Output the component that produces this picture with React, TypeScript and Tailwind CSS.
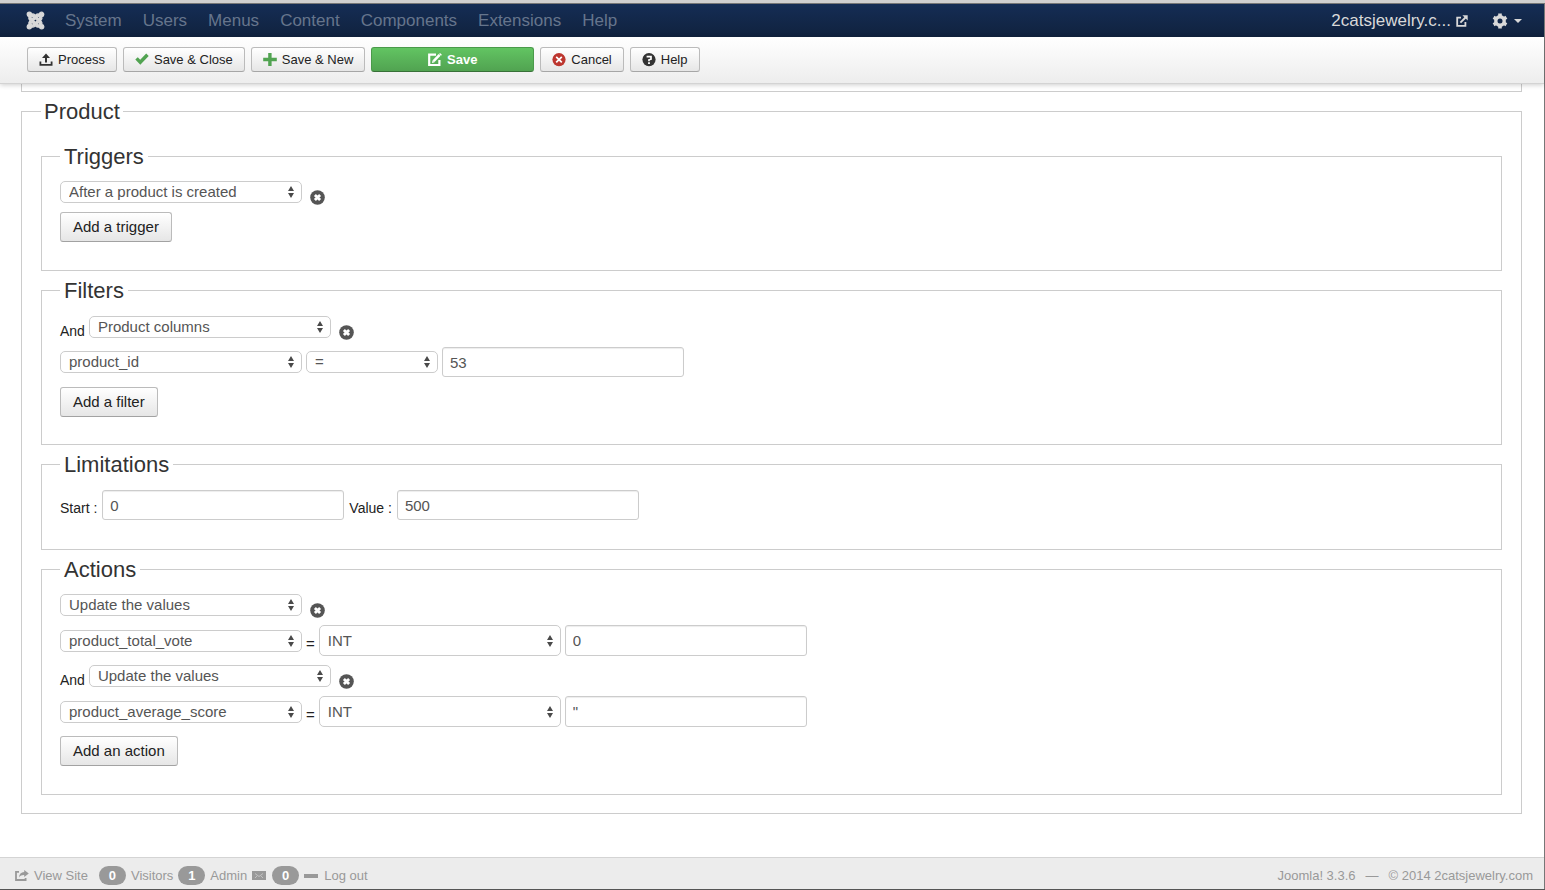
import { useState } from 'react'
import type { ReactNode } from 'react'
import { FaJoomla } from 'react-icons/fa'

const menuItems = ['System', 'Users', 'Menus', 'Content', 'Components', 'Extensions', 'Help']

function UploadIcon() {
  return (
    <svg viewBox="0 0 14 14" className="w-3.5 h-3.5" fill="#333" aria-hidden="true">
      <path d="M7 0.5 L11 5 H8 V9.5 H6 V5 H3 Z" />
      <path d="M0.5 8.5 H2.3 V11 H11.7 V8.5 H13.5 V12.8 H0.5 Z" />
    </svg>
  )
}

function CheckIcon() {
  return (
    <svg viewBox="0 0 14 14" className="w-3.5 h-3.5" fill="#51a351" aria-hidden="true">
      <path d="M0.3 6.6 L2.8 4.3 L5.2 6.8 L11.2 0.6 L13.7 3 L5.3 11.8 Z" />
    </svg>
  )
}

function PlusIcon() {
  return (
    <svg viewBox="0 0 14 14" className="w-3.5 h-3.5" fill="#51a351" aria-hidden="true">
      <path d="M5.2 0 H8.6 V4.8 H13.8 V8.2 H8.6 V13 H5.2 V8.2 H0.2 V4.8 H5.2 Z" />
    </svg>
  )
}

function EditIcon() {
  return (
    <svg viewBox="0 0 14 14" className="w-3.5 h-3.5" fill="none" stroke="#fff" aria-hidden="true">
      <path d="M8 1.6 H1.2 V12 H11.4 V7" strokeWidth="2.2" />
      <path d="M5.6 8.2 L11.6 1.8" strokeWidth="2.6" />
      <path d="M4 10 L4.6 7.2 L6.6 9.2 Z" fill="#fff" stroke="none" />
      <path d="M12 0 L13.9 1.8 L13 2.8 L11.1 0.9 Z" fill="#fff" stroke="none" />
    </svg>
  )
}

function CancelIcon() {
  return (
    <svg viewBox="0 0 14 14" className="w-3.5 h-3.5" aria-hidden="true">
      <circle cx="7" cy="6.6" r="6.6" fill="#bd362f" />
      <path d="M4.2 3.8 L9.8 9.4 M9.8 3.8 L4.2 9.4" stroke="#fff" strokeWidth="1.7" />
    </svg>
  )
}

function HelpIcon() {
  return (
    <svg viewBox="0 0 14 14" className="w-3.5 h-3.5" aria-hidden="true">
      <circle cx="7" cy="6.6" r="6.6" fill="#333" />
      <path d="M4.6 3.7 H9 V6.2 L7 6.8 V8.2" fill="none" stroke="#fff" strokeWidth="1.7" />
      <rect x="6.1" y="9.2" width="1.8" height="1.8" fill="#fff" />
    </svg>
  )
}

function NewTabIcon() {
  return (
    <svg viewBox="0 0 12 12" className="w-3 h-3" fill="none" stroke="#d9d9d9" aria-hidden="true">
      <path d="M5 2.6 H1.2 V10.8 H9.4 V7" strokeWidth="1.8" />
      <path d="M4.4 7.6 L9.5 2.5" strokeWidth="1.9" />
      <path d="M6.4 0.3 H11.7 V5.6 Z" fill="#d9d9d9" stroke="none" />
    </svg>
  )
}

function GearIcon() {
  return (
    <svg viewBox="0 0 16 16" className="w-4 h-4" aria-hidden="true">
      <circle cx="8" cy="8" r="4.2" fill="none" stroke="#d9d9d9" strokeWidth="3.4" />
      <g stroke="#d9d9d9" strokeWidth="3.6">
        <path d="M8 0.6 V3.4 M8 12.6 V15.4" />
        <path d="M1.6 4.3 L4 5.7 M12 10.3 L14.4 11.7" />
        <path d="M1.6 11.7 L4 10.3 M12 5.7 L14.4 4.3" />
      </g>
    </svg>
  )
}

function ShareIcon() {
  return (
    <svg viewBox="0 0 14 12" className="w-3.5 h-3" fill="none" stroke="#999" aria-hidden="true">
      <path d="M4 1.8 H1 V10 H10.6 V8" strokeWidth="1.8" />
      <path d="M9.2 0 L13.8 3.5 L9.2 7 V4.9 C6.8 4.8 5.4 5.4 4 7.4 C4.2 4.2 6 2.2 9.2 2.1 Z" fill="#999" stroke="none" />
    </svg>
  )
}

function MailIcon() {
  return (
    <svg viewBox="0 0 14 10" className="w-3.5 h-2.5" aria-hidden="true">
      <rect width="14" height="9" fill="#999" />
      <path d="M3 2.5 L7 5.5 L11 2.5 M3 7 L5 5 M11 7 L9 5" fill="none" stroke="#ccc" strokeWidth="0.8" />
    </svg>
  )
}

function ToolbarButton({ icon, children }: { icon: ReactNode; children: ReactNode }) {
  return (
    <button
      type="button"
      className="flex items-center gap-[5px] h-[25px] px-[11px] text-[13px] text-[#222] whitespace-nowrap rounded-[3px] border border-[#bbb] border-b-[#a6a6a6] bg-linear-to-b from-white to-[#e6e6e6]"
    >
      {icon}
      <span>{children}</span>
    </button>
  )
}

function AddButton({ children }: { children: ReactNode }) {
  return (
    <button
      type="button"
      className="block h-[30px] px-3 text-[15px] text-[#222] rounded-[3px] border border-[#bbb] border-b-[#a2a2a2] bg-linear-to-b from-white to-[#e6e6e6]"
    >
      {children}
    </button>
  )
}

function RemoveButton({ label }: { label: string }) {
  return (
    <button type="button" aria-label={label} className="ml-1">
      <svg viewBox="0 0 15 15" className="block w-[15px] h-[15px]" aria-hidden="true">
        <circle cx="7.5" cy="7.5" r="7.3" fill="#555" />
        <path d="M4.9 4.9 L10.1 10.1 M10.1 4.9 L4.9 10.1" stroke="#fff" strokeWidth="2.8" />
      </svg>
    </button>
  )
}

type SelectProps = {
  label: string
  options: string[]
  narrow?: boolean
  tall?: boolean
}

function Select({ label, options, narrow, tall }: SelectProps) {
  return (
    <div className={`relative shrink-0 ${narrow ? 'w-[132px]' : 'w-[242px]'}`}>
      <select
        aria-label={label}
        className={`block w-full appearance-none rounded-[5px] border border-[#ccc] bg-white pl-2 pr-5 text-[15px] leading-5 text-[#555] ${tall ? 'h-[31px]' : 'h-[22px]'}`}
      >
        {options.map((option) => (
          <option key={option}>{option}</option>
        ))}
      </select>
      <svg viewBox="0 0 6 12" className="absolute right-2 inset-y-0 my-auto w-1.5 h-3 pointer-events-none" fill="#4a4a4a" aria-hidden="true">
        <path d="M3 0 L6 5 H0 Z M3 12 L6 7 H0 Z" />
      </svg>
    </div>
  )
}

type TextFieldProps = {
  id: string
  initial: string
  label?: string
  tall?: boolean
}

function TextField({ id, initial, label, tall }: TextFieldProps) {
  const [value, setValue] = useState(initial)

  return (
    <input
      id={id}
      type="text"
      aria-label={label}
      value={value}
      onChange={(e) => setValue(e.target.value)}
      className={`w-[242px] rounded-[3px] border border-[#ccc] bg-white px-[7px] text-[15px] text-[#555] shadow-[inset_0_1px_1px_rgba(0,0,0,0.075)] ${tall ? 'h-[31px]' : 'h-[30px]'}`}
    />
  )
}

function Section({ title, className, children }: { title: string; className: string; children: ReactNode }) {
  return (
    <fieldset className="border border-[#ccc] px-[18px]">
      <legend className="px-1 text-[22px] leading-[31px] text-[#333]">{title}</legend>
      <div className={className}>{children}</div>
    </fieldset>
  )
}

function Badge({ children }: { children: ReactNode }) {
  return (
    <span className="flex items-center justify-center w-[27px] h-[19px] rounded-full bg-[#999] text-[13px] font-bold text-white">
      {children}
    </span>
  )
}

export default function App() {
  return (
    <div className="flex flex-col min-h-screen bg-white font-['Liberation_Sans',Arial,sans-serif] text-[#222] border-b border-[#555]">
      <div className="h-1 bg-[#d0d0d0] border-b border-[#777]" />

      <div className="flex flex-col grow border-r border-[#777]">
        <nav className="flex items-center h-[33px] pl-[26px] pr-[22px] bg-linear-to-b from-[#152d55] to-[#10223e] text-[17px]">
          <a href="#joomla" aria-label="Joomla">
            <FaJoomla className="w-[19px] h-[19px] text-[#d9d9d9]" strokeWidth={34} />
          </a>
          <div className="flex gap-[21px] ml-5 text-[#66758c]">
            {menuItems.map((item) => (
              <a key={item} href={`#${item.toLowerCase()}`}>{item}</a>
            ))}
          </div>
          <a href="#site" className="flex items-center gap-[5px] ml-auto text-[#d9d9d9]">
            2catsjewelry.c...
            <NewTabIcon />
          </a>
          <button type="button" aria-label="Settings" className="flex items-center gap-1.5 ml-6">
            <GearIcon />
            <svg viewBox="0 0 8 4" className="w-2 h-1" fill="#d9d9d9" aria-hidden="true">
              <path d="M0 0 H8 L4 4 Z" />
            </svg>
          </button>
        </nav>

        {/* Toolbar */}
        <div className="relative flex items-start gap-1.5 h-[47px] pt-2.5 pl-[27px] bg-linear-to-b from-white to-[#ededed] border-b border-[#d3d3d3] shadow-[0_1px_5px_rgba(0,0,0,0.2)]">
          <ToolbarButton icon={<UploadIcon />}>Process</ToolbarButton>
          <ToolbarButton icon={<CheckIcon />}>Save &amp; Close</ToolbarButton>
          <ToolbarButton icon={<PlusIcon />}>Save &amp; New</ToolbarButton>
          <button
            type="button"
            className="flex items-center justify-center gap-[5px] w-[163px] h-[25px] text-[13px] font-bold text-white rounded-[3px] border border-[#4a9a4a] border-b-[#387038] bg-linear-to-b from-[#62c462] to-[#51a351]"
          >
            <EditIcon />
            <span>Save</span>
          </button>
          <ToolbarButton icon={<CancelIcon />}>Cancel</ToolbarButton>
          <ToolbarButton icon={<HelpIcon />}>Help</ToolbarButton>
        </div>

        <main className="pl-[21px] pr-[22px] pb-10">
          <div className="h-2 mb-1 border border-t-0 border-[#ccc]" />

          <fieldset className="border border-[#ccc] px-[19px] pb-[18px]">
            <legend className="px-[3px] text-[22px] leading-[31px] text-[#333]">Product</legend>

            <div className="flex flex-col gap-1 pt-3.5">
              <Section title="Triggers" className="pt-[9px] pb-7">
                <div className="flex items-end gap-1 h-6 mb-[7px]">
                  <div className="self-start">
                    <Select label="Trigger" options={['After a product is created', 'After a product is updated']} />
                  </div>
                  <RemoveButton label="Remove trigger" />
                </div>
                <AddButton>Add a trigger</AddButton>
              </Section>

              <Section title="Filters" className="pt-2.5 pb-[27px]">
                <div className="flex items-end gap-1 h-6 mb-[7px]">
                  <span className="text-[14px] leading-[18px]">And</span>
                  <div className="self-start">
                    <Select label="Filter type" options={['Product columns', 'Product type']} />
                  </div>
                  <RemoveButton label="Remove filter" />
                </div>
                <div className="flex items-center gap-1 mb-2.5">
                  <Select label="Filter column" options={['product_id', 'product_name']} />
                  <Select label="Filter operator" options={['=', '!=', '>', '<']} narrow />
                  <TextField id="filter-value" label="Filter value" initial="53" />
                </div>
                <AddButton>Add a filter</AddButton>
              </Section>

              <Section title="Limitations" className="pt-2.5 pb-[29px]">
                <div className="flex items-end gap-[5px]">
                  <label htmlFor="limit-start" className="text-[14px] leading-6">Start :</label>
                  <TextField id="limit-start" initial="0" />
                  <label htmlFor="limit-value" className="text-[14px] leading-6">Value :</label>
                  <TextField id="limit-value" initial="500" />
                </div>
              </Section>

              <Section title="Actions" className="pt-[9px] pb-7">
                <div className="flex items-end gap-1 h-6 mb-[7px]">
                  <div className="self-start">
                    <Select label="First action" options={['Update the values', 'Remove']} />
                  </div>
                  <RemoveButton label="Remove first action" />
                </div>
                <div className="flex items-center gap-1 mb-[9px]">
                  <Select label="First action column" options={['product_total_vote', 'product_id']} />
                  <span className="self-end text-[15px] leading-6">=</span>
                  <Select label="First action type" options={['INT', 'STRING']} tall />
                  <TextField id="action-value-1" label="First action value" initial="0" tall />
                </div>
                <div className="flex items-end gap-1 h-6 mb-[7px]">
                  <span className="text-[14px] leading-[18px]">And</span>
                  <div className="self-start">
                    <Select label="Second action" options={['Update the values', 'Remove']} />
                  </div>
                  <RemoveButton label="Remove second action" />
                </div>
                <div className="flex items-center gap-1 mb-[9px]">
                  <Select label="Second action column" options={['product_average_score', 'product_id']} />
                  <span className="self-end text-[15px] leading-6">=</span>
                  <Select label="Second action type" options={['INT', 'STRING']} tall />
                  <TextField id="action-value-2" label="Second action value" initial={'"'} tall />
                </div>
                <AddButton>Add an action</AddButton>
              </Section>
            </div>
          </fieldset>
        </main>

        <footer className="flex items-center justify-between h-8 mt-auto pl-[15px] pr-[11px] pt-1 bg-[#ececec] border-t border-[#d4d4d4] text-[13px] text-[#999]">
          <div className="flex items-center gap-[5px]">
            <a href="#view-site" className="flex items-center gap-[5px] mr-1.5">
              <ShareIcon />
              View Site
            </a>
            <Badge>0</Badge>
            <span>Visitors</span>
            <Badge>1</Badge>
            <span>Admin</span>
            <a href="#messages" className="flex items-center gap-1.5" aria-label="Messages">
              <MailIcon />
              <Badge>0</Badge>
            </a>
            <a href="#logout" className="flex items-center gap-1.5">
              <span className="w-3.5 h-1 bg-[#999]" />
              Log out
            </a>
          </div>
          <p className="flex gap-2.5">
            <span>Joomla! 3.3.6</span>
            <span>—</span>
            <span>© 2014 2catsjewelry.com</span>
          </p>
        </footer>
      </div>
    </div>
  )
}
